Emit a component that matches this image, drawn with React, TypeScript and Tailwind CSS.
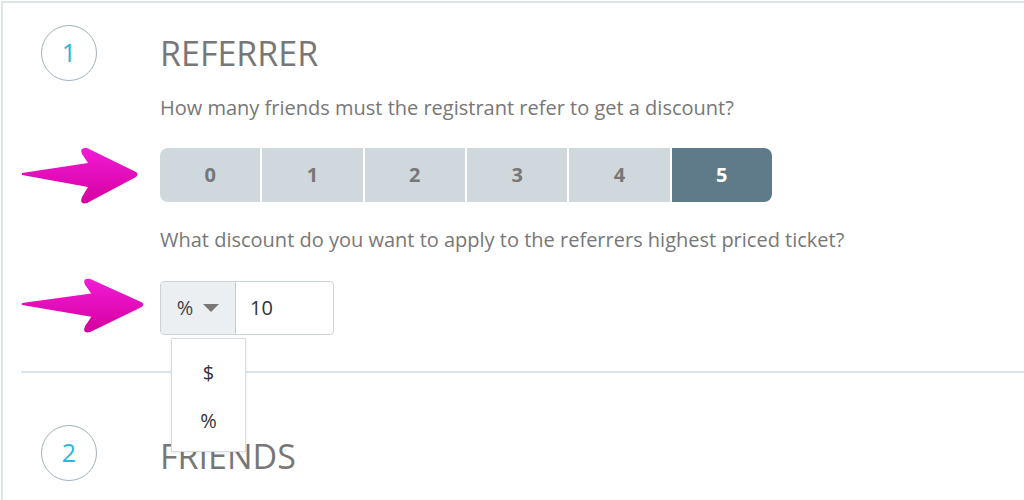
import { useState } from "react";

const counts = [0, 1, 2, 3, 4, 5];

function StepBadge({ n }: { n: number }) {
  return (
    <div className="flex h-[56px] w-[56px] items-center justify-center rounded-full border border-[#9db2bd] text-[25px] text-[#29b6d8]">
      {n}
    </div>
  );
}

function PinkArrow({ w = 122, h = 60 }: { w?: number; h?: number }) {
  return (
    <svg width={w} height={h} viewBox="0 0 122 60" preserveAspectRatio="none" className="shrink-0">
      <defs>
        <linearGradient id="pink" x1="0" y1="0" x2="0" y2="1">
          <stop offset="0" stopColor="#f21bd6" />
          <stop offset="1" stopColor="#d4009f" />
        </linearGradient>
      </defs>
      <path
        d="M1 27 L67 17 L61 8 Q58 1 66 2 L115 26 Q118 28 115 31 L66 57 Q58 59 61 51 L67 41 L1 29 Z"
        fill="url(#pink)"
      />
    </svg>
  );
}

export default function App() {
  const [picked, setPicked] = useState(5);

  return (
    <div className="h-[500px] w-full overflow-hidden bg-white font-['Open_Sans',sans-serif] text-[#777]">
      <div className="ml-[1px] mt-[1px] h-full border-l-2 border-t-2 border-[#dde5e9] pl-[18px]">
        {/* step 1 */}
        <div className="flex">
          <div className="w-[139px] shrink-0 pl-[20px] pt-[22px]">
            <StepBadge n={1} />
          </div>
          <div className="pt-[30px]">
            <h2 className="text-[34px] leading-[40px]">REFERRER</h2>
            <p className="mt-[21px] text-[20px] leading-[28px]">
              How many friends must the registrant refer to get a discount?
            </p>
            <div className="relative mt-[26px]">
              <div className="absolute left-[-139px] top-[-2px]">
                <PinkArrow />
              </div>
              <div className="flex h-[54px] w-[612px] gap-[2px] overflow-hidden rounded-[8px]">
                {counts.map((c) => (
                  <button
                    key={c}
                    onClick={() => setPicked(c)}
                    className={
                      c === picked
                        ? "flex-1 bg-[#5f7b89] text-[20px] font-bold text-white"
                        : "flex-1 bg-[#cfd8dd] text-[20px] font-bold text-[#777]"
                    }
                  >
                    {c}
                  </button>
                ))}
              </div>
            </div>
            <p className="mt-[24px] text-[20px] leading-[28px]">
              What discount do you want to apply to the referrers highest priced ticket?
            </p>
            <div className="relative mt-[27px]">
              <div className="absolute left-[-139px] top-[-4px]">
                <PinkArrow w={128} h={58} />
              </div>
              <div className="flex h-[54px] w-[174px] rounded-[4px] border border-[#ccd3d7]">
                <div className="flex w-[75px] items-center justify-center gap-[10px] rounded-l-[4px] border-r border-[#c4ccd1] bg-[#eceff1] text-[20px] text-[#444]">
                  <span>%</span>
                  <svg width="16" height="8" viewBox="0 0 16 8">
                    <path d="M0 0 H16 L8 8 Z" fill="#777" />
                  </svg>
                </div>
                <div className="flex items-center pl-[14px] text-[20px] text-[#333]">10</div>
              </div>
              {/* open unit menu */}
              <div className="absolute left-[11px] top-[57px] z-10 flex h-[114px] w-[75px] flex-col border border-[#d3dde2] bg-white shadow-[0_1px_3px_rgba(0,0,0,0.08)]">
                <div className="flex h-[66px] items-center justify-center pt-[2px] text-[20px] text-[#333]">$</div>
                <div className="flex h-[32px] items-center justify-center text-[20px] text-[#333]">%</div>
              </div>
            </div>
          </div>
        </div>

        <div className="mt-[36px] border-t-2 border-[#dbe4e8]" />

        {/* step 2 */}
        <div className="flex">
          <div className="w-[139px] shrink-0 pl-[20px] pt-[52px]">
            <StepBadge n={2} />
          </div>
          <div className="pt-[63px]">
            <h2 className="text-[34px] leading-[40px]">FRIENDS</h2>
          </div>
        </div>
      </div>
    </div>
  );
}
